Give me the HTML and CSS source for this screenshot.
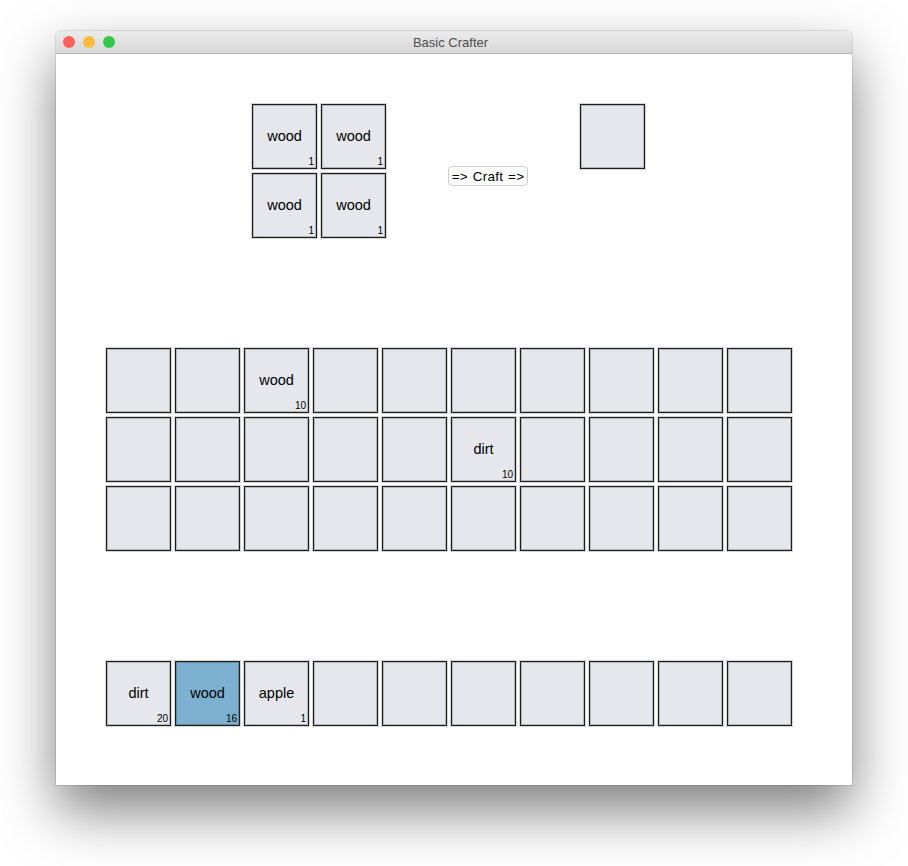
FILE: index.html
```html
<!DOCTYPE html>
<html lang="en">
<head>
  <meta charset="UTF-8">
  <title>Basic Crafter</title>
  <link rel="stylesheet" href="styles.css">
</head>
<body>
  <div class="window">
    <div class="titlebar">
      <div class="lights">
        <span class="light red"></span>
        <span class="light yellow"></span>
        <span class="light green"></span>
      </div>
      <div class="title">Basic Crafter</div>
    </div>

    <div class="content">
      <div class="crafting">
        <div class="craft-grid">
          <div class="slot"><span class="name">wood</span><span class="count">1</span></div>
          <div class="slot"><span class="name">wood</span><span class="count">1</span></div>
          <div class="slot"><span class="name">wood</span><span class="count">1</span></div>
          <div class="slot"><span class="name">wood</span><span class="count">1</span></div>
        </div>
        <button class="craft-btn">=&gt; Craft =&gt;</button>
        <div class="slot output"></div>
      </div>

      <div class="inventory">
        <div class="slot"></div>
        <div class="slot"></div>
        <div class="slot"><span class="name">wood</span><span class="count">10</span></div>
        <div class="slot"></div>
        <div class="slot"></div>
        <div class="slot"></div>
        <div class="slot"></div>
        <div class="slot"></div>
        <div class="slot"></div>
        <div class="slot"></div>

        <div class="slot"></div>
        <div class="slot"></div>
        <div class="slot"></div>
        <div class="slot"></div>
        <div class="slot"></div>
        <div class="slot"><span class="name">dirt</span><span class="count">10</span></div>
        <div class="slot"></div>
        <div class="slot"></div>
        <div class="slot"></div>
        <div class="slot"></div>

        <div class="slot"></div>
        <div class="slot"></div>
        <div class="slot"></div>
        <div class="slot"></div>
        <div class="slot"></div>
        <div class="slot"></div>
        <div class="slot"></div>
        <div class="slot"></div>
        <div class="slot"></div>
        <div class="slot"></div>
      </div>

      <div class="inventory hotbar">
        <div class="slot"><span class="name">dirt</span><span class="count">20</span></div>
        <div class="slot selected"><span class="name">wood</span><span class="count">16</span></div>
        <div class="slot"><span class="name">apple</span><span class="count">1</span></div>
        <div class="slot"></div>
        <div class="slot"></div>
        <div class="slot"></div>
        <div class="slot"></div>
        <div class="slot"></div>
        <div class="slot"></div>
        <div class="slot"></div>
      </div>
    </div>
  </div>
</body>
</html>
```

FILE: styles.css
```css
html, body {
  margin: 0;
  background: #fff;
}

body {
  box-sizing: border-box;
  height: 866px;
  padding: 31px 56px;
  font-family: "Liberation Sans", Arial, sans-serif;
  color: #000;
}

.window {
  width: 796px;
  height: 754px;
  background: #fff;
  border-radius: 5px 5px 0 0;
  box-shadow: 0 0 0 1px rgba(0, 0, 0, 0.1), 0 26px 56px rgba(0, 0, 0, 0.5);
  display: flex;
  flex-direction: column;
}

.titlebar {
  height: 22px;
  display: flex;
  align-items: center;
  background: linear-gradient(#ececec, #d6d6d6);
  border-bottom: 1px solid #b4b4b4;
  border-radius: 5px 5px 0 0;
  padding: 0 7px;
}

.lights {
  display: flex;
  gap: 8px;
  width: 60px;
}

.light {
  width: 12px;
  height: 12px;
  border-radius: 50%;
}

.red { background: #fc605b; }
.yellow { background: #fdbc40; }
.green { background: #34c84a; }

.title {
  flex: 1;
  text-align: center;
  font-size: 13px;
  color: #4d4d4d;
  margin-right: 67px;
}

.content {
  padding: 50px 0 0 50px;
}

.crafting {
  display: flex;
  align-items: center;
  margin-left: 146px;
  height: 138px;
}

.craft-grid {
  display: grid;
  grid-template-columns: 65px 65px;
  gap: 4px;
  align-self: flex-start;
}

.craft-btn {
  margin: 6px 0 0 62px;
  width: 80px;
  height: 20px;
  padding: 0;
  background: #fff;
  border: 1px solid #cdcdcd;
  border-radius: 4px;
  font-family: "Liberation Sans", Arial, sans-serif;
  font-size: 13.5px;
  letter-spacing: 0.2px;
  word-spacing: 1px;
  color: #000;
}

.output {
  margin-left: 52px;
  align-self: flex-start;
}

.slot {
  position: relative;
  box-sizing: border-box;
  width: 65px;
  height: 65px;
  background: #e6e7ec;
  border: 1px solid #1f1f1f;
  box-shadow: inset 0 0 0 1px rgba(0, 0, 0, 0.22), 0 0 0 1px #d4d4d4;
  display: flex;
  align-items: center;
  justify-content: center;
}

.slot.selected {
  background: #7bb0d0;
}

.name {
  font-size: 14.5px;
  margin-top: -1px;
}

.count {
  position: absolute;
  right: 2px;
  bottom: 1px;
  font-size: 10px;
}

.inventory {
  display: grid;
  grid-template-columns: repeat(10, 65px);
  gap: 4px;
  margin-top: 106px;
}

.hotbar {
  margin-top: 110px;
}
```
